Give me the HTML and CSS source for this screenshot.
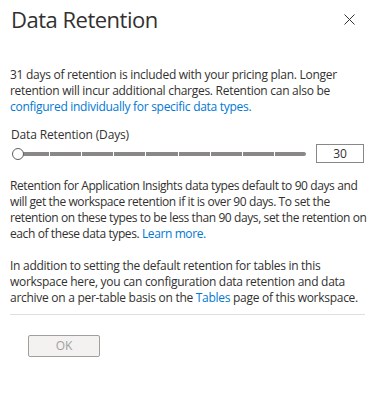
FILE: index.html
```html
<!DOCTYPE html>
<html lang="en">
<head>
<meta charset="UTF-8">
<meta name="viewport" content="width=device-width, initial-scale=1.0">
<title>Data Retention</title>
<link rel="stylesheet" href="styles.css">
</head>
<body>

<div class="panel">
    <div class="panel-header">
        <h2>Data Retention</h2>
        <button class="close" aria-label="Close">
            <svg width="11" height="11" viewBox="0 0 11 11"><path d="M0.5 0.5 L10.5 10.5 M10.5 0.5 L0.5 10.5" stroke="#323130" stroke-width="1" fill="none"/></svg>
        </button>
    </div>

    <p class="text">31 days of retention is included with your pricing plan. Longer retention will incur additional charges. Retention can also be <a href="#">configured individually for specific data types.</a></p>

    <!-- Retention slider -->
    <div class="field">
        <label for="retention-days">Data Retention (Days)</label>
        <div class="slider-row">
            <div class="slider">
                <div class="track">
                    <span></span><span></span><span></span><span></span><span></span><span></span><span></span><span></span><span></span>
                </div>
                <div class="thumb"></div>
            </div>
            <input type="text" id="retention-days" class="days" value="30">
        </div>
    </div>

    <p class="text tight">Retention for Application Insights data types default to 90 days and will get the workspace retention if it is over 90 days. To set the retention on these types to be less than 90 days, set the retention on each of these data types. <a href="#">Learn more.</a></p>

    <p class="text">In addition to setting the default retention for tables in this workspace here, you can configuration data retention and data archive on a per-table basis on the <a href="#">Tables</a> page of this workspace.</p>

    <div class="footer">
        <button class="button" disabled>OK</button>
    </div>
</div>

</body>
</html>
```

FILE: styles.css
```css
body {
    font-family: "Open Sans", sans-serif;
    margin: 0;
    padding: 0;
    background-color: #fff;
    color: #323130;
}
.panel {
    padding: 0 10px;
}
.panel-header {
    display: flex;
    justify-content: space-between;
    align-items: center;
    height: 38px;
}
.panel-header h2 {
    margin: 0;
    font-size: 22px;
    font-weight: 400;
    letter-spacing: -0.5px;
    padding-left: 1px;
}
.close {
    border: none;
    background: none;
    padding: 0;
    margin-right: 10px;
    display: flex;
}
.text {
    font-size: 12px;
    letter-spacing: -0.28px;
    line-height: 16px;
    margin: 29px -9px 0 0;
}
.text.tight {
    letter-spacing: -0.4px;
}
.text + .text {
    margin-top: 16px;
}
.text a {
    color: #0078d4;
    text-decoration: none;
}
.field {
    margin-top: 12px;
}
.field label {
    display: block;
    font-size: 12px;
    letter-spacing: -0.15px;
    line-height: 16px;
    padding-left: 1px;
}
.slider-row {
    display: flex;
    align-items: center;
    justify-content: space-between;
    margin-top: 1px;
}
.slider {
    position: relative;
    width: 296px;
    height: 14px;
    display: flex;
    align-items: center;
}
.track {
    display: flex;
    gap: 1px;
    margin-left: 8px;
    width: 288px;
    height: 4px;
}
.track span {
    flex: 1;
    background-color: #8a8886;
}
.track span:last-child {
    border-radius: 0 2px 2px 0;
}
.thumb {
    position: absolute;
    left: 2px;
    top: 1px;
    width: 10px;
    height: 10px;
    border: 1px solid #605e5c;
    border-radius: 50%;
    background-color: #fff;
}
.days {
    width: 48px;
    height: 19px;
    box-sizing: border-box;
    border: 1px solid #8a8886;
    font-family: inherit;
    font-size: 12px;
    color: #323130;
    text-align: center;
    padding: 0;
    margin-right: 1px;
}
.field + .text {
    margin-top: 15px;
}
.footer {
    border-top: 1px solid #e1dfdd;
    margin-top: 8px;
    padding: 18px 18px;
}
.button {
    width: 72px;
    height: 22px;
    background-color: #f3f2f1;
    border: 1px solid #a19f9d;
    border-radius: 2px;
    color: #a19f9d;
    font-family: inherit;
    font-size: 12px;
}
```
